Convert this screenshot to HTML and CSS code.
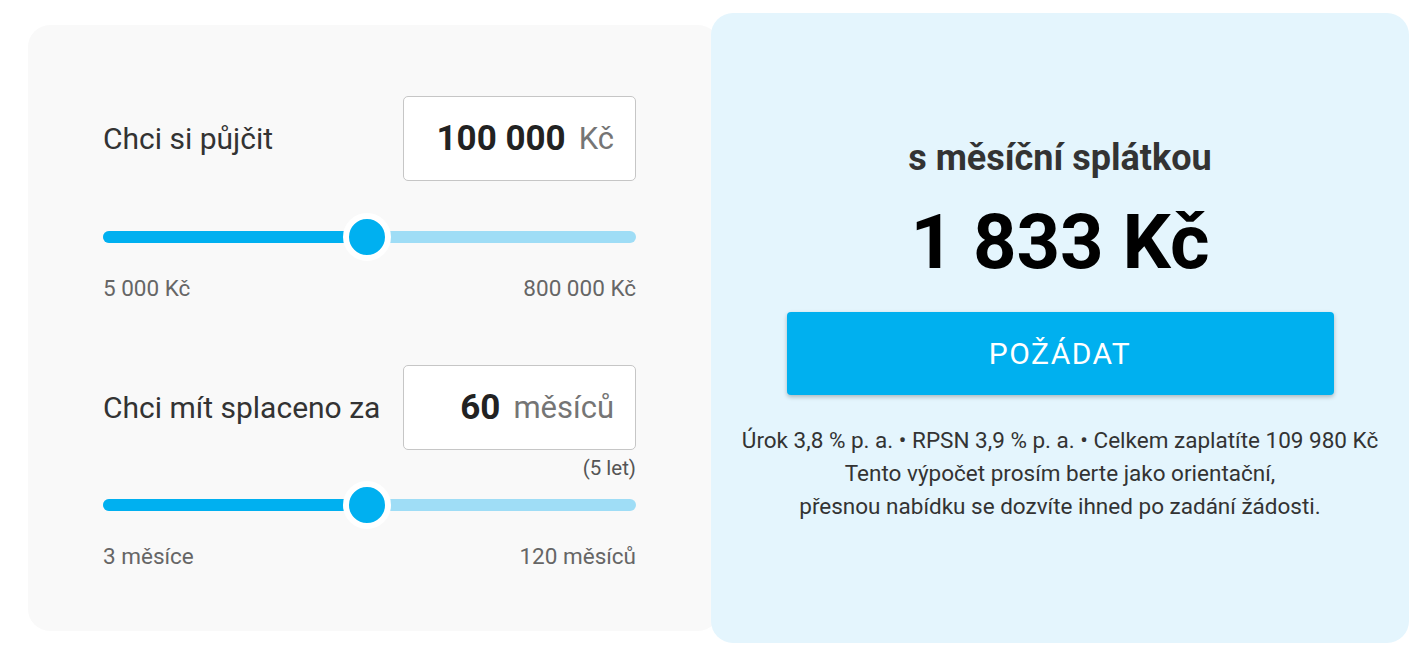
FILE: index.html
```html
<!DOCTYPE html>
<html lang="cs">
<head>
<meta charset="utf-8">
<title>Kalkulačka půjčky</title>
<link rel="stylesheet" href="styles.css">
</head>
<body>
<div class="calc">
  <section class="inputs">
    <div class="field">
      <div class="row">
        <label class="label">Chci si půjčit</label>
        <div class="box"><span class="val">100 000</span><span class="unit">Kč</span></div>
      </div>
      <div class="slider">
        <div class="fill" style="width:49.5%"></div>
        <div class="thumb" style="left:49.5%"></div>
      </div>
      <div class="range"><span>5 000 Kč</span><span>800 000 Kč</span></div>
    </div>
    <div class="field second">
      <div class="row">
        <label class="label">Chci mít splaceno za</label>
        <div class="box"><span class="val">60</span><span class="unit">měsíců</span></div>
      </div>
      <div class="note">(5 let)</div>
      <div class="slider tight">
        <div class="fill" style="width:49.5%"></div>
        <div class="thumb" style="left:49.5%"></div>
      </div>
      <div class="range"><span>3 měsíce</span><span>120 měsíců</span></div>
    </div>
  </section>
  <section class="result">
    <h2 class="title">s měsíční splátkou</h2>
    <div class="amount">1 833 Kč</div>
    <button class="btn">POŽÁDAT</button>
    <p class="info">Úrok 3,8 % p. a. • RPSN 3,9 % p. a. • Celkem zaplatíte 109 980 Kč<br>Tento výpočet prosím berte jako orientační,<br>přesnou nabídku se dozvíte ihned po zadání žádosti.</p>
  </section>
</div>
</body>
</html>
```

FILE: styles.css
```css
* { box-sizing: border-box; }
html, body { margin: 0; padding: 0; background: #fff; }
body { font-family: Roboto, "Noto Sans", Arial, sans-serif; color: #333; }

.calc {
  display: flex;
  align-items: center;
  padding: 13px 0 0 28px;
}

.inputs {
  width: 692px;
  height: 606px;
  background: #f9f9f9;
  border-radius: 22px;
  padding: 71px 84px 0 75px;
  flex-shrink: 0;
}

.field.second { margin-top: 65px; }

.row {
  display: flex;
  align-items: center;
  justify-content: space-between;
}

.label {
  font-size: 30px;
  color: #333;
}

.box {
  width: 233px;
  height: 85px;
  background: #fff;
  border: 1px solid #c6c6c6;
  border-radius: 5px;
  display: flex;
  align-items: center;
  justify-content: flex-end;
  padding-right: 21px;
  gap: 13px;
}
.val { font-size: 35px; font-weight: 700; color: #222; }
.unit { font-size: 31px; color: #757575; }

.slider {
  position: relative;
  height: 12px;
  margin-top: 50px;
  background: #9fddf6;
  border-radius: 6px;
}
.slider.tight { margin-top: 19px; }
.fill {
  height: 12px;
  background: #00b0f0;
  border-radius: 6px 0 0 6px;
}
.thumb {
  position: absolute;
  top: 50%;
  width: 48px;
  height: 48px;
  margin: -24px 0 0 -24px;
  background: #00b0f0;
  border: 6px solid #fff;
  border-radius: 50%;
}

.note {
  text-align: right;
  font-size: 20.5px;
  line-height: 24px;
  margin-top: 6px;
  color: #555;
}

.range {
  display: flex;
  justify-content: space-between;
  font-size: 22.5px;
  line-height: 24px;
  margin-top: 33px;
  color: #666;
}

.result {
  width: 698px;
  height: 630px;
  margin-left: -9px;
  background: #e4f5fd;
  border-radius: 22px;
  padding-top: 125px;
  display: flex;
  flex-direction: column;
  align-items: center;
  flex-shrink: 0;
}

.title {
  margin: 0;
  font-size: 36px;
  line-height: 40px;
  font-weight: 700;
  color: #333;
}

.amount {
  margin-top: 20px;
  font-size: 76px;
  line-height: 88px;
  font-weight: 700;
  color: #000;
}

.btn {
  margin-top: 26px;
  width: 547px;
  height: 83px;
  border: 0;
  border-radius: 4px;
  background: #00b0ef;
  color: #fff;
  font-family: inherit;
  font-size: 30px;
  letter-spacing: 1.5px;
  box-shadow: 0 2px 4px rgba(0,0,0,0.25);
}

.info {
  margin: 29px 0 0;
  text-align: center;
  font-size: 22.5px;
  line-height: 33px;
  color: #333;
}
```
